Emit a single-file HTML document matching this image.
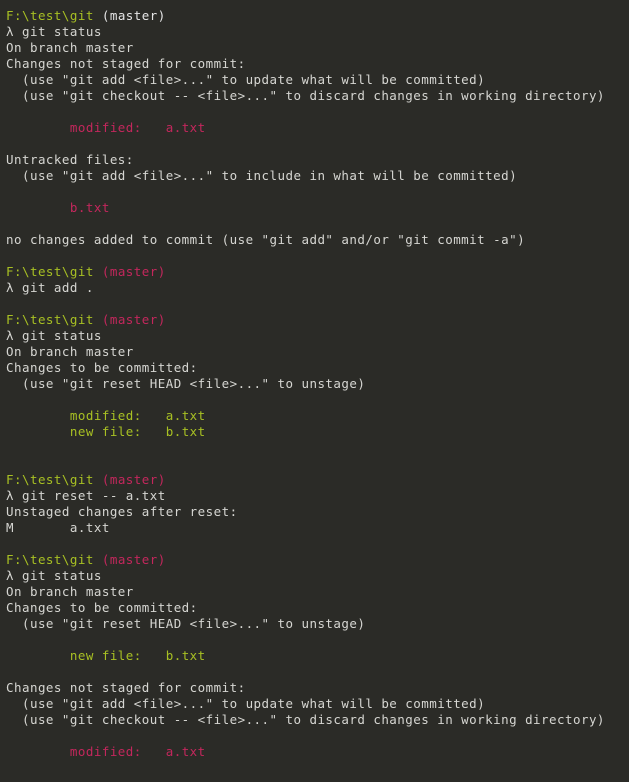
<!DOCTYPE html>
<html><head><meta charset="utf-8"><style>
html,body{margin:0;padding:0;background:#2b2b27;width:629px;height:782px;overflow:hidden}
pre{margin:0;position:absolute;left:6px;top:8px;font-family:"DejaVu Sans Mono","Liberation Mono",monospace;font-size:12.5px;letter-spacing:0.46px;line-height:16px;color:#d6d6d2}
.g{color:#a8c023}.r{color:#c3275c}.m{color:#c3275c}.w{color:#e6e6e6}
</style></head><body><pre><span class="g">F:\test\git</span> <span class="w">(master)</span>
λ git status
On branch master
Changes not staged for commit:
  (use "git add &lt;file&gt;..." to update what will be committed)
  (use "git checkout -- &lt;file&gt;..." to discard changes in working directory)

        <span class="r">modified:   a.txt</span>

Untracked files:
  (use "git add &lt;file&gt;..." to include in what will be committed)

        <span class="r">b.txt</span>

no changes added to commit (use "git add" and/or "git commit -a")

<span class="g">F:\test\git</span> <span class="m">(master)</span>
λ git add .

<span class="g">F:\test\git</span> <span class="m">(master)</span>
λ git status
On branch master
Changes to be committed:
  (use "git reset HEAD &lt;file&gt;..." to unstage)

        <span class="g">modified:   a.txt</span>
        <span class="g">new file:   b.txt</span>


<span class="g">F:\test\git</span> <span class="m">(master)</span>
λ git reset -- a.txt
Unstaged changes after reset:
M       a.txt

<span class="g">F:\test\git</span> <span class="m">(master)</span>
λ git status
On branch master
Changes to be committed:
  (use "git reset HEAD &lt;file&gt;..." to unstage)

        <span class="g">new file:   b.txt</span>

Changes not staged for commit:
  (use "git add &lt;file&gt;..." to update what will be committed)
  (use "git checkout -- &lt;file&gt;..." to discard changes in working directory)

        <span class="r">modified:   a.txt</span>
</pre></body></html>
